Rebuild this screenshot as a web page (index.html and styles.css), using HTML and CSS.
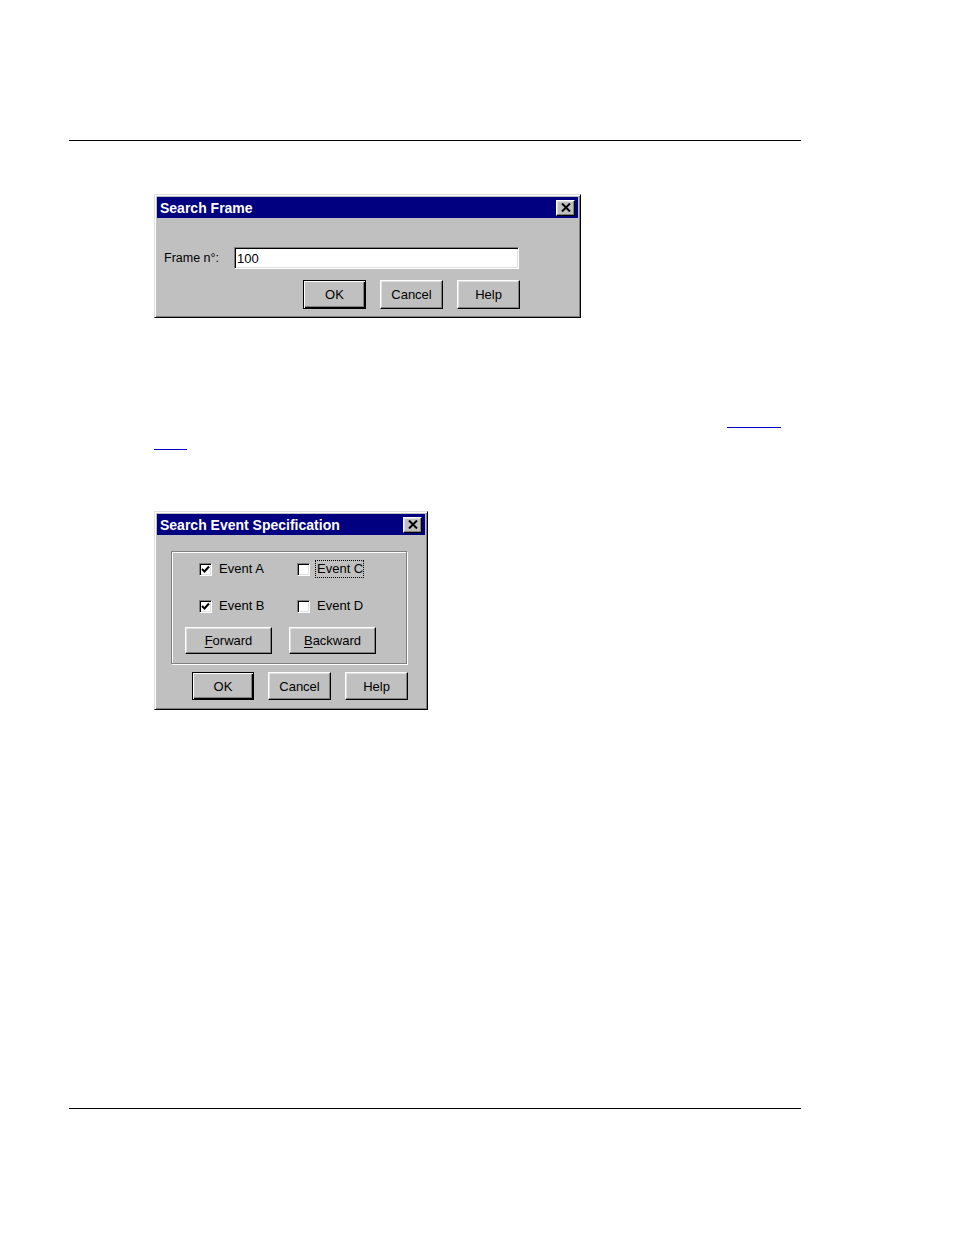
FILE: index.html
```html
<!DOCTYPE html>
<html>
<head>
<meta charset="utf-8">
<link rel="stylesheet" href="styles.css">
</head>
<body>
<div class="page">
  <div class="rule rule-top"></div>

  <div class="dialog dlg-frame">
    <div class="titlebar">
      <span class="title">Search Frame</span>
      <span class="close"><svg width="10" height="9" viewBox="0 0 10 9"><path d="M1 0.5 L9 8.5 M9 0.5 L1 8.5" stroke="#000" stroke-width="2"/></svg></span>
    </div>
    <div class="frame-body">
      <div class="field-row">
        <span class="label">Frame n°:</span>
        <div class="input"><span>100</span></div>
      </div>
      <div class="btn-row frame-btns">
        <div class="btn default"><span>OK</span></div>
        <div class="btn"><span>Cancel</span></div>
        <div class="btn"><span>Help</span></div>
      </div>
    </div>
  </div>

  <div class="link link-1"></div>
  <div class="link link-2"></div>

  <div class="dialog dlg-event">
    <div class="titlebar">
      <span class="title">Search Event Specification</span>
      <span class="close"><svg width="10" height="9" viewBox="0 0 10 9"><path d="M1 0.5 L9 8.5 M9 0.5 L1 8.5" stroke="#000" stroke-width="2"/></svg></span>
    </div>
    <div class="event-body">
      <div class="group">
        <div class="checks">
          <div class="check"><span class="box"><svg width="9" height="9" viewBox="0 0 9 9"><path d="M1 4 L3.5 6.5 L8 1.5" fill="none" stroke="#000" stroke-width="2"/></svg></span><span class="clabel">Event A</span></div>
          <div class="check"><span class="box"></span><span class="clabel focus">Event C</span></div>
          <div class="check"><span class="box"><svg width="9" height="9" viewBox="0 0 9 9"><path d="M1 4 L3.5 6.5 L8 1.5" fill="none" stroke="#000" stroke-width="2"/></svg></span><span class="clabel">Event B</span></div>
          <div class="check"><span class="box"></span><span class="clabel">Event D</span></div>
        </div>
        <div class="btn-row group-btns">
          <div class="btn wide"><span><u>F</u>orward</span></div>
          <div class="btn wide"><span><u>B</u>ackward</span></div>
        </div>
      </div>
      <div class="btn-row event-btns">
        <div class="btn default small"><span>OK</span></div>
        <div class="btn small"><span>Cancel</span></div>
        <div class="btn small"><span>Help</span></div>
      </div>
    </div>
  </div>

  <div class="rule rule-bottom"></div>
</div>
</body>
</html>
```

FILE: styles.css
```css
* { box-sizing: border-box; }
html, body { margin: 0; padding: 0; background: #fff; }
body {
  font-family: "Liberation Sans", Arial, sans-serif;
  font-size: 12.5px;
  color: #000;
}
.page {
  width: 954px;
  height: 1235px;
  padding-top: 140px;
  overflow: hidden;
}
.rule {
  margin-left: 69px;
  width: 732px;
  height: 0;
  border-top: 1px solid #000;
}
.rule-bottom { margin-top: 398px; }

.dialog {
  margin-left: 154px;
  background: #c0c0c0;
  border: 1px solid;
  border-color: #dfdfdf #000 #000 #dfdfdf;
  box-shadow: inset 1px 1px #fff, inset -1px -1px #808080;
  padding: 2px;
}
.dlg-frame { margin-top: 53px; width: 427px; height: 124px; }
.dlg-event { margin-top: 61px; width: 274px; height: 199px; }

.titlebar {
  height: 21px;
  background: #000080;
  display: flex;
  align-items: center;
  justify-content: space-between;
  padding: 0 3px 0 3px;
}
.title {
  color: #fff;
  font-weight: bold;
  font-size: 14px;
  line-height: 21px;
  padding-top: 1px;
}
.close {
  width: 19px;
  height: 16px;
  background: #c0c0c0;
  border: 1px solid;
  border-color: #fff #000 #000 #fff;
  box-shadow: inset -1px -1px #808080, inset 1px 1px #dfdfdf;
  display: flex;
  align-items: center;
  justify-content: center;
}
.close svg { display: block; }

.frame-body { padding: 29px 0 0 7px; }
.field-row {
  display: flex;
  align-items: center;
  height: 22px;
}
.label { width: 70px; }
.input {
  width: 285px;
  height: 22px;
  background: #fff;
  border: 1px solid;
  border-color: #808080 #fff #fff #808080;
  box-shadow: inset 1px 1px #000, inset -1px -1px #dfdfdf;
  padding: 0 2px;
  display: flex;
  align-items: center;
  font-size: 13px;
}
.btn-row { display: flex; }
.frame-btns { margin-top: 11px; padding-left: 139px; gap: 14px; }

.btn {
  width: 63px;
  height: 29px;
  background: #c0c0c0;
  border: 1px solid;
  border-color: #fff #000 #000 #fff;
  box-shadow: inset -1px -1px #808080, inset 1px 1px #dfdfdf;
  display: flex;
  align-items: center;
  justify-content: center;
  font-size: 13px;
}
.btn.default {
  border: 1px solid #000;
  box-shadow: inset 1px 1px #fff, inset -1px -1px #000, inset -2px -2px #808080;
}
.btn.wide { width: 87px; height: 27px; }
.btn.small { height: 28px; }
.btn.default.small { width: 62px; }
.btn u { text-decoration: underline; text-underline-offset: 2px; }

.link {
  height: 0;
  border-top: 1px solid #0000cc;
}
.link-1 { margin-top: 109px; margin-left: 727px; width: 54px; }
.link-2 { margin-top: 21px; margin-left: 154px; width: 33px; }

.event-body { padding: 16px 0 0 14px; }
.group {
  width: 236px;
  height: 113px;
  border: 1px solid #808080;
  box-shadow: inset 1px 1px #fff, 1px 1px #fff;
  padding: 10px 0 0 13px;
}
.checks {
  display: grid;
  grid-template-columns: 98px auto;
  row-gap: 23px;
  padding-left: 14px;
}
.check {
  display: flex;
  align-items: center;
  height: 14px;
}
.box {
  width: 13px;
  height: 13px;
  background: #fff;
  border: 1px solid;
  border-color: #808080 #fff #fff #808080;
  box-shadow: inset 1px 1px #000, inset -1px -1px #dfdfdf;
  display: flex;
  align-items: center;
  justify-content: center;
  flex: none;
}
.box svg { display: block; }
.clabel {
  margin-left: 5px;
  font-size: 13px;
  line-height: 14px;
  padding: 1px 1px;
  border: 1px dotted transparent;
}
.clabel.focus { border-color: #000; padding: 1px 0 1px 1px; }
.group-btns { margin-top: 14px; gap: 17px; }
.event-btns { margin-top: 8px; padding-left: 21px; gap: 14px; }
```
